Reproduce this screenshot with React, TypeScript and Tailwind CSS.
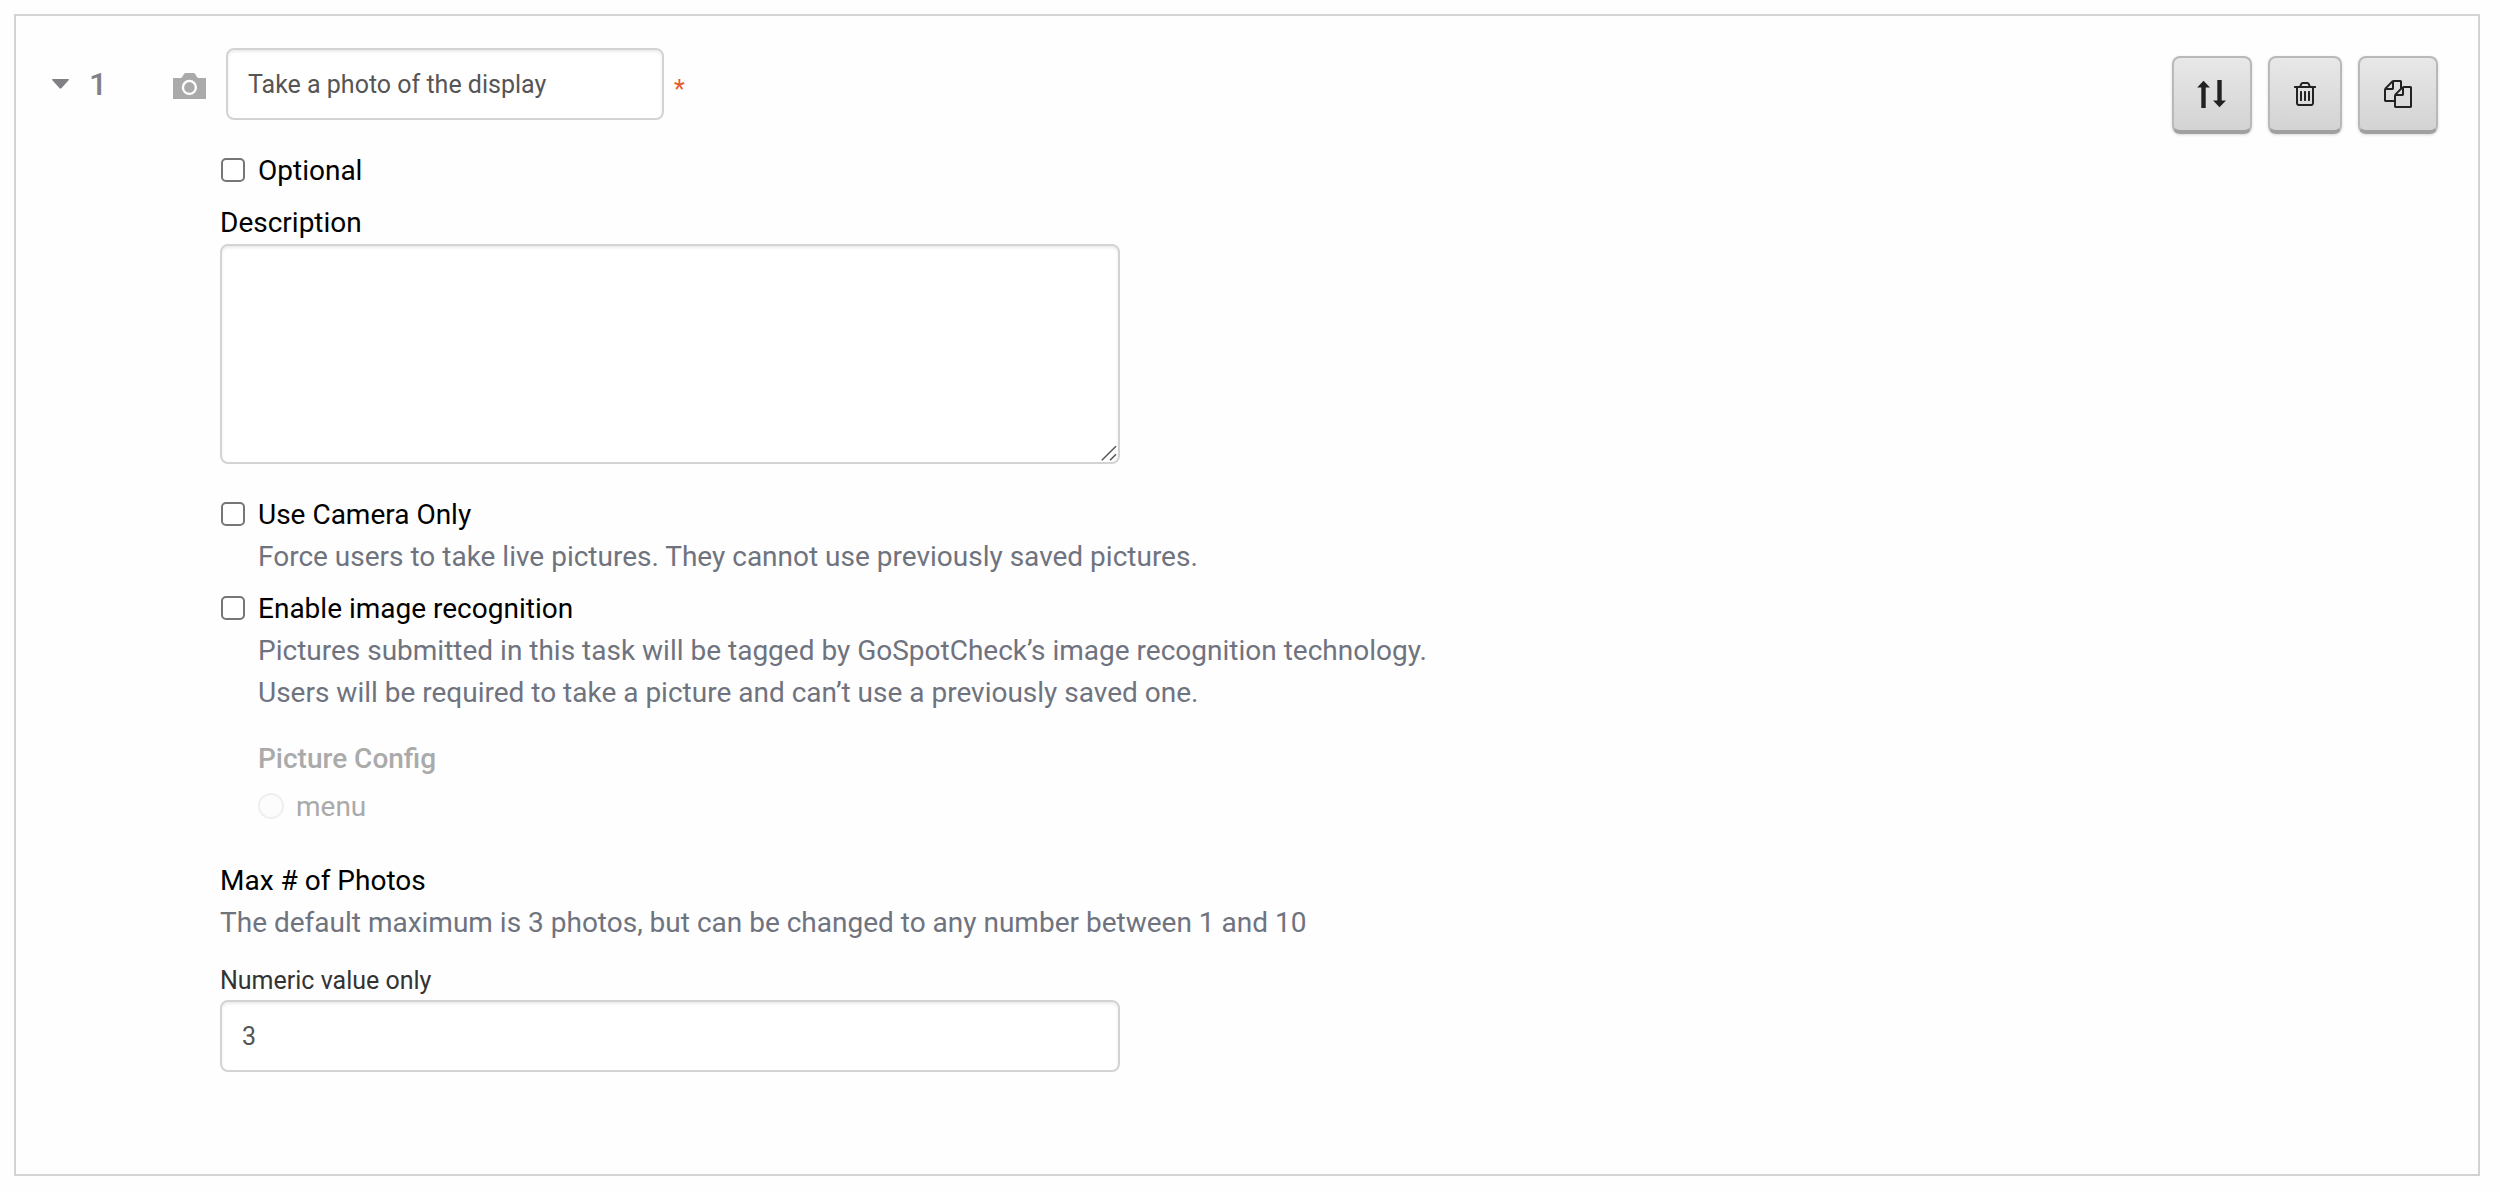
import React from "react";

const inputClass =
  "block h-[72px] rounded-[8px] border-2 border-[#d3d3d3] bg-white px-5 text-[25px] leading-[40px] text-[#555] shadow-[inset_0_2px_3px_rgba(0,0,0,0.08)] outline-none";

const checkboxClass =
  "mt-2 ml-px mr-[13px] size-6 shrink-0 appearance-none rounded-[5px] border-2 border-[#767676] bg-white checked:bg-[#767676]";

function CheckField({ id, label, help }: { id: string; label: string; help?: string[] }) {
  return (
    <div>
      <div className="flex items-start">
        <input id={id} type="checkbox" className={checkboxClass} />
        <label htmlFor={id}>{label}</label>
      </div>
      {help?.map((line) => (
        <p key={line} className="pl-[38px] text-[#6f737e]">
          {line}
        </p>
      ))}
    </div>
  );
}

function ToolButton({ label, children }: { label: string; children: React.ReactNode }) {
  return (
    <button
      type="button"
      aria-label={label}
      className="flex h-[78px] items-center rounded-[8px] border-2 border-b-4 border-[#b9b9b9] border-b-[#a0a0a0] bg-linear-to-b from-[#e8e8e8] to-[#d3d3d3] px-6 text-[#222] shadow-[0_1px_3px_rgba(0,0,0,0.15)]"
    >
      {children}
    </button>
  );
}

function ReorderIcon() {
  return (
    <svg
      width="28"
      height="28"
      viewBox="0 0 28 28"
      fill="currentColor"
      aria-hidden="true"
      className="overflow-visible"
    >
      <path d="M5.5 .7 12 7.4H7.7V28H3.3V7.4H-.8Z" />
      <path d="M21.5 27.2 28 20.4H23.7V0H19.3V20.4H15.1Z" />
    </svg>
  );
}

function TrashIcon() {
  return (
    <svg width="22" height="28" viewBox="192 0 1408 1792" fill="currentColor" aria-hidden="true">
      <path d="M704 736v576q0 14-9 23t-23 9h-64q-14 0-23-9t-9-23v-576q0-14 9-23t23-9h64q14 0 23 9t9 23zm256 0v576q0 14-9 23t-23 9h-64q-14 0-23-9t-9-23v-576q0-14 9-23t23-9h64q14 0 23 9t9 23zm256 0v576q0 14-9 23t-23 9h-64q-14 0-23-9t-9-23v-576q0-14 9-23t23-9h64q14 0 23 9t9 23zm128 724v-948h-896v948q0 22 7 40.5t14.5 27 10.5 8.5h832q3 0 10.5-8.5t14.5-27 7-40.5zm-672-1076h448l-48-117q-7-9-17-11h-317q-10 2-17 11zm928 32v64q0 14-9 23t-23 9h-96v948q0 83-47 143.5t-113 60.5h-832q-66 0-113-58.5t-47-141.5v-952h-96q-14 0-23-9t-9-23v-64q0-14 9-23t23-9h309l70-167q15-37 54-63t79-26h320q40 0 79 26t54 63l70 167h309q14 0 23 9t9 23z" />
    </svg>
  );
}

function CopyIcon() {
  return (
    <svg width="28" height="28" viewBox="0 0 1792 1792" fill="currentColor" aria-hidden="true">
      <path d="M1696 384q40 0 68 28t28 68v1216q0 40-28 68t-68 28h-960q-40 0-68-28t-28-68v-288h-544q-40 0-68-28t-28-68v-672q0-40 20-88t48-76l408-408q28-28 76-48t88-20h416q40 0 68 28t28 68v328q68-40 128-40h416zm-544 213l-299 299h299v-299zm-640-384l-299 299h299v-299zm196 647l316-316v-416h-384v416q0 40-28 68t-68 28h-416v640h512v-256q0-40 20-88t48-76zm956 804v-1152h-384v416q0 40-28 68t-68 28h-416v640h896z" />
    </svg>
  );
}

export default function App() {
  return (
    <main className="bg-[#fefefe] px-[14px] pt-[14px] pb-4 pr-5 font-[Roboto,sans-serif] text-[28px] leading-[42px] text-black">
      <section className="border-2 border-[#d3d3d3] pt-8 pb-[102px]">
        <header className="flex items-start justify-between pr-10 pl-9">
          <div className="flex h-[72px] items-center">
            <button type="button" aria-label="Collapse task" className="flex w-[37px] items-center">
              <svg width="17" height="10" viewBox="0 0 17 10" fill="#808085" aria-hidden="true">
                <path d="M.8 0H16.2Q17.6 .3 16.4 1.6L9.4 9.3Q8.5 10.2 7.6 9.3L.6 1.6Q-.6 .3 .8 0Z" />
              </svg>
            </button>
            <span className="w-[84px] text-[32px] font-medium text-[#808085]">1</span>
            <svg width="33" height="26" viewBox="0 0 33 26" aria-hidden="true" className="mt-1 mr-5">
              <path fill="#aaa" d="M0 5H7.6Q8.6 5 9.2 4L11 1Q11.6 0 12.8 0H20.4Q21.6 0 22.2 1L24 4Q24.6 5 25.6 5H33V26H0Z" />
              <circle cx="16.4" cy="14.4" r="6.5" fill="none" stroke="#fff" strokeWidth="2.4" />
            </svg>
            <input
              type="text"
              aria-label="Task title"
              defaultValue="Take a photo of the display"
              className={`${inputClass} w-[438px]`}
            />
            <span className="mt-3 ml-[10px] text-[25px] text-[#e8592b]">*</span>
          </div>
          <div className="mt-2 flex gap-4">
            <ToolButton label="Reorder task">
              <ReorderIcon />
            </ToolButton>
            <ToolButton label="Delete task">
              <TrashIcon />
            </ToolButton>
            <ToolButton label="Duplicate task">
              <CopyIcon />
            </ToolButton>
          </div>
        </header>

        <div className="mt-4 pl-[204px]">
          <CheckField id="optional" label="Optional" />

          <label htmlFor="description" className="mt-[10px] block">
            Description
          </label>
          <div className="relative max-w-[900px]">
            <textarea
              id="description"
              className="block h-[220px] w-full resize-none rounded-[8px] border-2 border-[#d3d3d3] bg-white px-5 py-4 text-[25px] text-[#555] shadow-[inset_0_2px_3px_rgba(0,0,0,0.08)] outline-none"
            />
            <svg
              width="16"
              height="16"
              viewBox="0 0 16 16"
              aria-hidden="true"
              className="pointer-events-none absolute right-[3px] bottom-[3px]"
            >
              <path d="M.8 15.2 15 1.2M9 15.2 15 9.2" stroke="#5a5a5a" strokeWidth="1.6" fill="none" />
            </svg>
          </div>

          <div className="mt-[30px] flex flex-col gap-[10px]">
            <CheckField
              id="camera-only"
              label="Use Camera Only"
              help={["Force users to take live pictures. They cannot use previously saved pictures."]}
            />
            <CheckField
              id="image-recognition"
              label="Enable image recognition"
              help={[
                "Pictures submitted in this task will be tagged by GoSpotCheck’s image recognition technology.",
                "Users will be required to take a picture and can’t use a previously saved one.",
              ]}
            />
          </div>

          <fieldset disabled className="mt-6 pl-[38px] text-[#aaa]">
            <legend className="font-medium">Picture Config</legend>
            <div className="mt-[6px] flex items-start">
              <input
                id="config-menu"
                type="radio"
                name="picture-config"
                className="mt-[7px] mr-3 size-[26px] appearance-none rounded-full border-2 border-[#efefef] bg-[#fcfcfc]"
              />
              <label htmlFor="config-menu">menu</label>
            </div>
          </fieldset>

          <h2 className="mt-8">Max # of Photos</h2>
          <p className="text-[#6f737e]">
            The default maximum is 3 photos, but can be changed to any number between 1 and 10
          </p>
          <label htmlFor="max-photos" className="mt-[17px] block text-[25px] leading-[39px] text-[#333]">
            Numeric value only
          </label>
          <input
            id="max-photos"
            type="text"
            inputMode="numeric"
            defaultValue="3"
            className={`${inputClass} w-full max-w-[900px]`}
          />
        </div>
      </section>
    </main>
  );
}
